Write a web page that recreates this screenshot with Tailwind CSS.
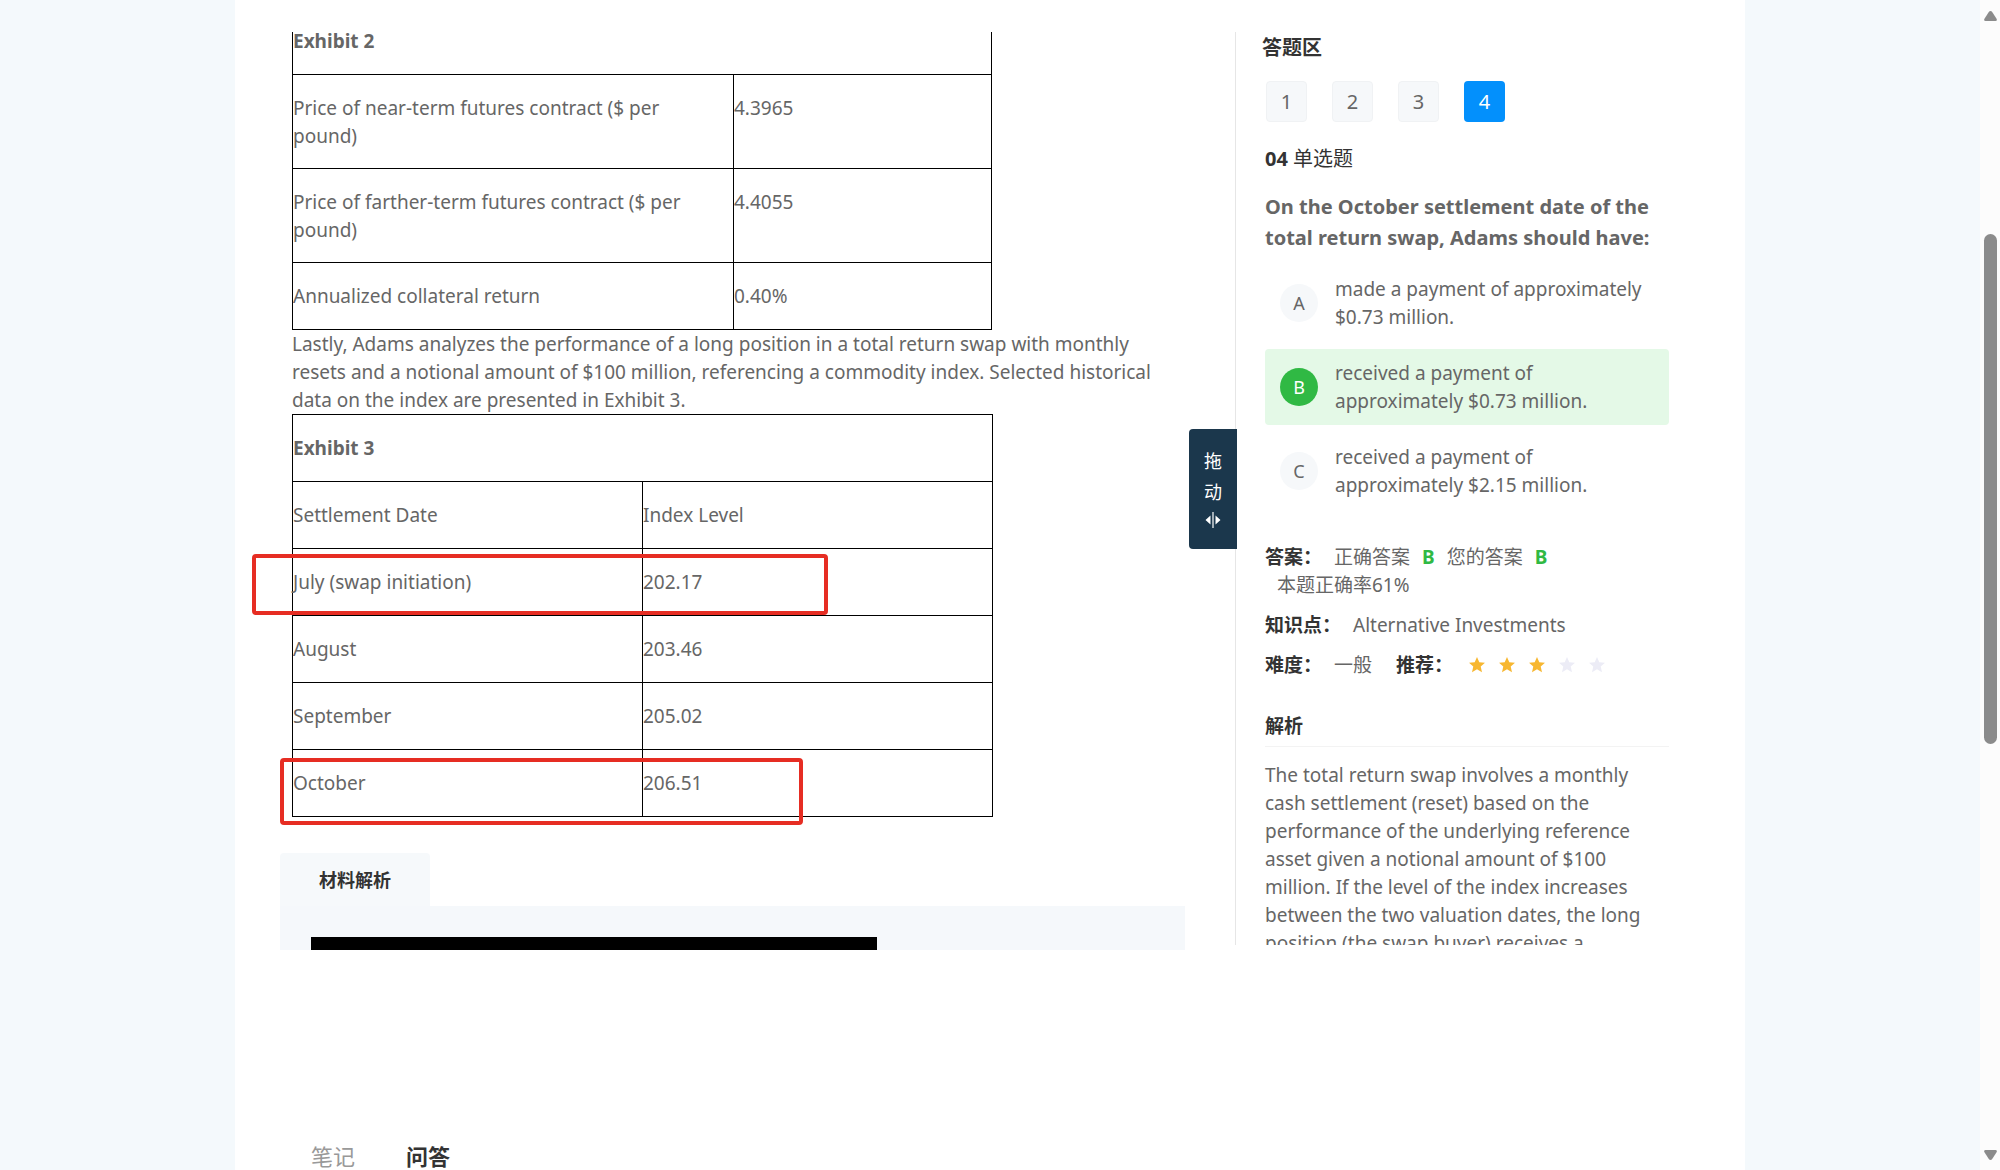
<!DOCTYPE html>
<html lang="zh-CN">
<head>
<meta charset="utf-8">
<title>答题区</title>
<script src="https://cdn.jsdelivr.net/npm/@tailwindcss/browser@4"></script>
</head>
<body class="flex h-screen overflow-hidden bg-[#f4f9fc] font-['Noto_Sans','Noto_Sans_CJK_SC',sans-serif] text-[19px] leading-7 text-[#666]">
<div class="min-w-0 flex-1">
  <main class="mx-auto h-full w-full max-w-[1510px] bg-white pt-8">
    <div class="flex">
      <!-- Reading material -->
      <section class="relative ml-[17px] h-[918px] min-w-0 flex-1 overflow-hidden pl-7 pr-1">
        <div class="-mt-[25px] px-3">
          <table class="w-[700px] table-fixed border-collapse text-left">
            <colgroup><col class="w-[441px]"><col></colgroup>
            <tbody>
              <tr><th colspan="2" class="border border-black py-[19px] font-bold">Exhibit 2</th></tr>
              <tr><td class="border border-black pt-[19px] pb-[18px] pr-4 align-top">Price of near-term futures contract ($ per pound)</td><td class="border border-black pt-[19px] pb-[18px] align-top">4.3965</td></tr>
              <tr><td class="border border-black pt-[19px] pb-[18px] pr-4 align-top">Price of farther-term futures contract ($ per pound)</td><td class="border border-black pt-[19px] pb-[18px] align-top">4.4055</td></tr>
              <tr><td class="border border-black py-[19px] pr-4">Annualized collateral return</td><td class="border border-black py-[19px]">0.40%</td></tr>
            </tbody>
          </table>
          <p>Lastly, Adams analyzes the performance of a long position in a total return swap with monthly resets and a notional amount of $100 million, referencing a commodity index. Selected historical data on the index are presented in Exhibit 3.</p>
          <table class="w-[701px] table-fixed border-collapse text-left">
            <tbody>
              <tr><th colspan="2" class="border border-black py-[19px] font-bold">Exhibit 3</th></tr>
              <tr><td class="border border-black py-[19px]">Settlement Date</td><td class="border border-black py-[19px]">Index Level</td></tr>
              <tr><td class="border border-black py-[19px]">July (swap initiation)</td><td class="border border-black py-[19px]">202.17</td></tr>
              <tr><td class="border border-black py-[19px]">August</td><td class="border border-black py-[19px]">203.46</td></tr>
              <tr><td class="border border-black py-[19px]">September</td><td class="border border-black py-[19px]">205.02</td></tr>
              <tr><td class="border border-black py-[19px]">October</td><td class="border border-black py-[19px]">206.51</td></tr>
            </tbody>
          </table>
        </div>
        <div class="mt-9">
          <h2 class="flex h-[53px] w-[150px] items-center justify-center rounded-t bg-[#f6f9fb] text-lg font-bold text-[#333]">材料解析</h2>
          <div class="bg-[#f5f8fb] px-[31px] pt-[31px]"><div class="h-10 w-[566px] bg-black"></div></div>
        </div>
        <!-- Marker frames over the July and October rows -->
        <div class="absolute left-0 top-[522px] h-[61px] w-[576px] rounded border-4 border-[#e62d23]"></div>
        <div class="absolute left-7 top-[726px] h-[67px] w-[523px] rounded border-4 border-[#e62d23]"></div>
      </section>

      <!-- Answer area -->
      <aside class="relative ml-[46px] h-[913px] w-[510px] border-l border-[#e6e6e6]">
        <button type="button" class="absolute -left-[47px] top-[397px] flex h-[120px] w-12 flex-col items-center rounded-l bg-[#1b374c] pt-[17px] text-lg leading-[31px] text-white">
          <span>拖</span><span>动</span>
          <svg class="mt-[3px]" width="16" height="18" viewBox="0 0 16 18" fill="#fff"><path d="M5.500 4.500v9L.5 9zM10.500 4.500v9l5-4.500z"/><path d="M7.400 1h1.200v16H7.400z"/></svg>
        </button>
        <div class="h-full overflow-hidden pl-[29px] pr-[76px]">
          <h2 class="-ml-[3px] text-xl leading-8 font-bold text-[#333]">答题区</h2>
          <nav class="mt-[17px] flex gap-[25px] pl-px text-xl">
            <button type="button" class="size-[41px] rounded border border-[#f0f2f4] bg-[#f6f8fa]">1</button>
            <button type="button" class="size-[41px] rounded border border-[#f0f2f4] bg-[#f6f8fa]">2</button>
            <button type="button" class="size-[41px] rounded border border-[#f0f2f4] bg-[#f6f8fa]">3</button>
            <button type="button" class="size-[41px] rounded bg-[#0390fc] text-white">4</button>
          </nav>
          <h3 class="mt-[22px] text-xl leading-[30px] text-[#333]"><b>04</b> 单选题</h3>
          <p class="mt-[17px] text-xl leading-[31px] font-bold">On the October settlement date of the total return swap, Adams should have:</p>
          <ul class="mt-3 flex flex-col gap-2">
            <li><button type="button" class="flex w-full items-center gap-[17px] rounded py-2.5 pr-2.5 pl-[15px] text-left"><span class="grid size-[38px] shrink-0 place-items-center rounded-full bg-[#f6f8fa] text-lg">A</span><span>made a payment of approximately $0.73 million.</span></button></li>
            <li><button type="button" class="flex w-full items-center gap-[17px] rounded bg-[#e4f9e7] py-2.5 pr-2.5 pl-[15px] text-left"><span class="grid size-[38px] shrink-0 place-items-center rounded-full bg-[#30b944] text-lg text-white">B</span><span>received a payment of approximately $0.73 million.</span></button></li>
            <li><button type="button" class="flex w-full items-center gap-[17px] rounded py-2.5 pr-2.5 pl-[15px] text-left"><span class="grid size-[38px] shrink-0 place-items-center rounded-full bg-[#f6f8fa] text-lg">C</span><span>received a payment of approximately $2.15 million.</span></button></li>
          </ul>
          <div class="mt-[34px] flex"><b class="w-[69px] text-[#333]">答案：</b><span>正确答案</span><b class="ml-3 text-[#30b944]">B</b><span class="ml-3">您的答案</span><b class="ml-3 text-[#30b944]">B</b></div>
          <p class="pl-3">本题正确率61%</p>
          <div class="mt-3 flex"><b class="w-[88px] text-[#333]">知识点：</b><span>Alternative Investments</span></div>
          <div class="mt-3 flex"><b class="w-[69px] text-[#333]">难度：</b><span>一般</span><b class="ml-6 text-[#333]">推荐：</b>
            <span class="ml-4 flex items-center gap-3.5">
              <svg width="16" height="16" viewBox="0 0 16 16" fill="#f7b731"><path d="M8 0l2.3 5.2 5.7.6-4.300 3.800L13 15.200 8 12.200 3 15.200 4.300 9.600 0 5.800l5.700-.6z"/></svg>
              <svg width="16" height="16" viewBox="0 0 16 16" fill="#f7b731"><path d="M8 0l2.3 5.2 5.7.6-4.300 3.800L13 15.200 8 12.200 3 15.200 4.300 9.600 0 5.800l5.700-.6z"/></svg>
              <svg width="16" height="16" viewBox="0 0 16 16" fill="#f7b731"><path d="M8 0l2.3 5.2 5.7.6-4.300 3.800L13 15.200 8 12.200 3 15.200 4.300 9.600 0 5.800l5.700-.6z"/></svg>
              <svg width="16" height="16" viewBox="0 0 16 16" fill="#ececf6"><path d="M8 0l2.3 5.2 5.7.6-4.300 3.800L13 15.200 8 12.200 3 15.200 4.300 9.600 0 5.800l5.700-.6z"/></svg>
              <svg width="16" height="16" viewBox="0 0 16 16" fill="#ececf6"><path d="M8 0l2.3 5.2 5.7.6-4.300 3.800L13 15.200 8 12.200 3 15.200 4.300 9.600 0 5.800l5.700-.6z"/></svg>
            </span>
          </div>
          <h3 class="mt-[33px] border-b border-[#f3f3f3] pb-1.5 font-bold text-[#333]">解析</h3>
          <p class="mt-3.5">The total return swap involves a monthly cash settlement (reset) based on the performance of the underlying reference asset given a notional amount of $100 million. If the level of the index increases between the two valuation dates, the long position (the swap buyer) receives a</p>
        </div>
      </aside>
    </div>
    <nav class="mt-[190px] flex gap-[51px] pl-[76px] text-[22px] leading-8">
      <a href="#" class="text-[#999]">笔记</a>
      <a href="#" class="font-bold text-[#333]">问答</a>
    </nav>
  </main>
</div>
<!-- Window scrollbar -->
<div class="flex h-full w-5 flex-col items-center bg-[#fcfcfc] pt-[11px] pb-2.5">
  <svg width="13" height="10" viewBox="0 0 13 10" fill="#8b8b8b"><path d="M6.500 0Q7.500 0 8.200 1L12.700 8Q13.300 10 11.500 10H1.500Q-.3 10 .3 8L4.800 1Q5.500 0 6.500 0z"/></svg>
  <div class="mt-[213px] h-[510px] w-[13px] rounded-full bg-[#8b8b8b]"></div>
  <svg class="mt-auto" width="13" height="10" viewBox="0 0 13 10" fill="#8b8b8b"><path d="M6.500 10Q7.500 10 8.200 9L12.700 2Q13.300 0 11.500 0H1.500Q-.3 0 .3 2L4.800 9Q5.500 10 6.500 10z"/></svg>
</div>
</body>
</html>
